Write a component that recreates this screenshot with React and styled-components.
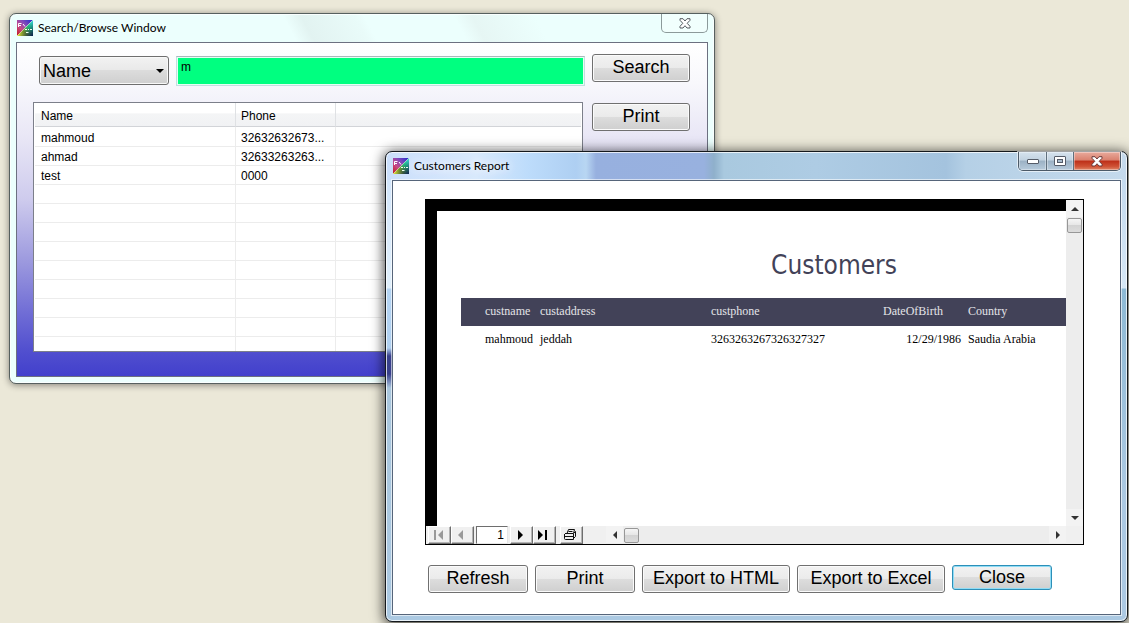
import * as React from "react";
import styled, { createGlobalStyle } from "styled-components";

const contacts = [
  { name: "mahmoud", phone: "32632632673..." },
  { name: "ahmad", phone: "32633263263..." },
  { name: "test", phone: "0000" },
];
const EMPTY_ROWS = 9;

const customers = [
  {
    custname: "mahmoud",
    custaddress: "jeddah",
    custphone: "3263263267326327327",
    dateOfBirth: "12/29/1986",
    country: "Saudia Arabia",
  },
];

const AppIcon = ({ id }) => (
  <svg width="16" height="16" viewBox="0 0 16 16" aria-hidden="true">
    <defs>
      <linearGradient id={`${id}-a`} x1="0" y1="1" x2="1" y2="0">
        <stop offset="0" stopColor="#c01818" />
        <stop offset="0.35" stopColor="#c84a86" />
        <stop offset="0.6" stopColor="#8a4ab8" />
        <stop offset="1" stopColor="#1c2cd0" />
      </linearGradient>
      <linearGradient id={`${id}-b`} x1="0" y1="1" x2="1" y2="0">
        <stop offset="0" stopColor="#f4f230" />
        <stop offset="0.35" stopColor="#7a9a28" />
        <stop offset="0.65" stopColor="#22c888" />
        <stop offset="1" stopColor="#38e0f0" />
      </linearGradient>
      <linearGradient id={`${id}-c`} x1="0.5" y1="0.5" x2="1" y2="1">
        <stop offset="0" stopColor="#103050" stopOpacity="0" />
        <stop offset="1" stopColor="#081c50" />
      </linearGradient>
    </defs>
    <path d="M0 0H16L0 16Z" fill={`url(#${id}-a)`} />
    <path d="M16 0V16H0Z" fill={`url(#${id}-b)`} />
    <path d="M16 0V16H0Z" fill={`url(#${id}-c)`} />
    <path d="M0 16L16 0" stroke="#e8e8c0" strokeWidth="0.5" />
    <path d="M1.500 7V3.500H4.500M1.500 5.500H4M6 4L8 6.500" stroke="#fff" strokeWidth="1" fill="none" />
    <path d="M8 9.500H10M11 9.500H12M13 9.500H15M9 12.500H11.500" stroke="#f0fff0" strokeWidth="1" />
  </svg>
);

const CrossGlyph = ({ fill, stroke }) => (
  <svg width="12" height="11" viewBox="0 0 12 11" aria-hidden="true">
    <path
      d="M1 .7H4L6 3 8 .7H11V2.300L8.200 5.300 11 8.300V10H8L6 7.700 4 10H1V8.300L3.800 5.300 1 2.300Z"
      fill={fill}
      stroke={stroke}
      strokeWidth="1"
      strokeLinejoin="round"
    />
  </svg>
);

const Arrow = ({ dir, size = 4, fill = "#333" }) => {
  const turn = { up: 0, right: 90, down: 180, left: 270 }[dir];
  return (
    <svg width="8" height="8" viewBox="-4 -4 8 8" aria-hidden="true">
      <path d={`M${-size} 2L0 ${2 - size}L${size} 2Z`} fill={fill} transform={`rotate(${turn})`} />
    </svg>
  );
};

const NavGlyph = ({ back, bar, fill }) => (
  <svg width="12" height="12" viewBox="0 0 12 12" aria-hidden="true">
    <g fill={fill} transform={back ? "translate(12 0) scale(-1 1)" : undefined}>
      <path d={bar ? "M1 1V11L6 6Z" : "M4 1V11L9 6Z"} />
      {bar && <path d="M8 1H10V11H8Z" />}
    </g>
  </svg>
);

const PrinterGlyph = () => (
  <svg width="12" height="12" viewBox="0 0 12 12" fill="none" stroke="#111" aria-hidden="true">
    <path d="M3 4.500L4.500 .5H10.500L9.500 4.500" />
    <path d="M4.500 2.500H8.500M1 4.500H9.500M9.500 4.500L11.500 2.500V7.500L9.500 9.500" />
    <path d="M.5 5V9.500Q.5 10.500 1.500 10.500H9.500V5M.5 7.500H9.500" />
  </svg>
);

const SearchWindow = () => {
  const [field, setField] = React.useState("name");
  const [query, setQuery] = React.useState("m");

  return (
    <SearchFrame aria-label="Search/Browse Window">
      <TitleBar>
        <TitleLabel>
          <AppIcon id="search-icon" />
          <Caption>Search/Browse Window</Caption>
        </TitleLabel>
        <InactiveClose aria-label="Close window">
          <CrossGlyph fill="#fff" stroke="#555b60" />
        </InactiveClose>
      </TitleBar>
      <SearchClient>
        <FilterBar>
          <SelectWrap>
            <FieldSelect aria-label="Search field" value={field} onChange={(e) => setField(e.target.value)}>
              <option value="name">Name</option>
              <option value="phone">Phone</option>
            </FieldSelect>
            <Arrow dir="down" fill="#000" />
          </SelectWrap>
          <QueryInput aria-label="Search text" value={query} onChange={(e) => setQuery(e.target.value)} />
        </FilterBar>
        <PushButton>Search</PushButton>
        <ListView>
          <ListTable>
            <colgroup>
              <ListCol $width={201} />
              <ListCol $width={100} />
              <col />
            </colgroup>
            <thead>
              <tr>
                <ListHead>Name</ListHead>
                <ListHead>Phone</ListHead>
                <ListHead as="td" />
              </tr>
            </thead>
            <tbody>
              {contacts.map((contact) => (
                <ListRow key={contact.name}>
                  <ListCell>{contact.name}</ListCell>
                  <ListCell>{contact.phone}</ListCell>
                  <ListCell />
                </ListRow>
              ))}
              {Array.from({ length: EMPTY_ROWS }, (_, i) => (
                <ListRow key={i}>
                  <ListCell />
                  <ListCell />
                  <ListCell />
                </ListRow>
              ))}
            </tbody>
          </ListTable>
        </ListView>
        <SideActions>
          <PushButton>Print</PushButton>
        </SideActions>
      </SearchClient>
    </SearchFrame>
  );
};

const ReportPage = () => (
  <Paper>
    <ReportTitle>Customers</ReportTitle>
    <ReportTable>
      <colgroup>
        <ListCol $width={79} />
        <ListCol $width={171} />
        <ListCol $width={172} />
        <ListCol $width={85} />
        <col />
      </colgroup>
      <thead>
        <tr>
          <ReportHead>custname</ReportHead>
          <ReportHead>custaddress</ReportHead>
          <ReportHead>custphone</ReportHead>
          <ReportHead>DateOfBirth</ReportHead>
          <ReportHead>Country</ReportHead>
        </tr>
      </thead>
      <tbody>
        {customers.map((row) => (
          <tr key={row.custphone}>
            <ReportCell>{row.custname}</ReportCell>
            <ReportCell>{row.custaddress}</ReportCell>
            <ReportCell>{row.custphone}</ReportCell>
            <ReportCell $right>{row.dateOfBirth}</ReportCell>
            <ReportCell>{row.country}</ReportCell>
          </tr>
        ))}
      </tbody>
    </ReportTable>
  </Paper>
);

const ReportWindow = () => {
  const [page, setPage] = React.useState("1");

  return (
    <ReportFrame aria-label="Customers Report">
      <TitleBar>
        <TitleLabel>
          <AppIcon id="report-icon" />
          <Caption $glow>Customers Report</Caption>
        </TitleLabel>
        <CaptionButtons>
          <CaptionButton $width={27} aria-label="Minimize">
            <svg width="12" height="5" viewBox="0 0 12 5" aria-hidden="true">
              <rect x=".5" y=".5" width="11" height="4" rx=".5" fill="#fff" stroke="#555c68" />
            </svg>
          </CaptionButton>
          <CaptionButton $width={27} aria-label="Maximize">
            <svg width="12" height="10" viewBox="0 0 12 10" aria-hidden="true">
              <rect x=".5" y=".5" width="11" height="9" rx=".5" fill="#fff" stroke="#555c68" />
              <rect x="3.500" y="3.500" width="5" height="3" fill="#a9bccd" stroke="#555c68" />
            </svg>
          </CaptionButton>
          <CaptionButton $width={47} $danger aria-label="Close window">
            <CrossGlyph fill="#fff" stroke="#6b3a3a" />
          </CaptionButton>
        </CaptionButtons>
      </TitleBar>
      <ReportClient>
        <Viewer>
          <Canvas>
            <ReportPage />
          </Canvas>
          <ScrollBar $vertical>
            <ScrollArrow aria-label="Scroll up"><Arrow dir="up" /></ScrollArrow>
            <ScrollTrack $vertical><ScrollThumb /></ScrollTrack>
            <ScrollArrow aria-label="Scroll down"><Arrow dir="down" /></ScrollArrow>
          </ScrollBar>
          <PagerRow>
            <Pager>
              <PagerButton disabled aria-label="First page"><NavGlyph back bar fill="#999" /></PagerButton>
              <PagerButton disabled aria-label="Previous page"><NavGlyph back fill="#999" /></PagerButton>
              <PageInput aria-label="Page" value={page} onChange={(e) => setPage(e.target.value)} />
              <PagerButton aria-label="Next page"><NavGlyph fill="#000" /></PagerButton>
              <PagerButton aria-label="Last page"><NavGlyph bar fill="#000" /></PagerButton>
              <PrintTool aria-label="Print report"><PrinterGlyph /></PrintTool>
            </Pager>
            <ScrollBar>
              <ScrollArrow aria-label="Scroll left"><Arrow dir="left" /></ScrollArrow>
              <ScrollTrack><ScrollThumb /></ScrollTrack>
              <ScrollArrow aria-label="Scroll right"><Arrow dir="right" /></ScrollArrow>
            </ScrollBar>
          </PagerRow>
          <ScrollCorner />
        </Viewer>
        <Actions>
          <PushButton $width={100}>Refresh</PushButton>
          <PushButton $width={100}>Print</PushButton>
          <PushButton $width={148}>Export to HTML</PushButton>
          <PushButton $width={148}>Export to Excel</PushButton>
          <PushButton $width={100} $focused>Close</PushButton>
        </Actions>
      </ReportClient>
    </ReportFrame>
  );
};

const App = () => (
  <Desktop>
    <GlobalStyle />
    <SearchWindow />
    <ReportWindow />
  </Desktop>
);

const GlobalStyle = createGlobalStyle`
  * {
    box-sizing: border-box;
  }
  body {
    margin: 0;
    font-family: "Liberation Sans", Arial, sans-serif;
    font-size: 12px;
    color: #000;
  }
  button, input, select {
    font-family: inherit;
    color: inherit;
    margin: 0;
  }
  svg {
    display: block;
    flex: none;
  }
`

const Desktop = styled.main`
  position: relative;
  min-height: 100vh;
  overflow: hidden;
  background: #ebe8d8;
`

const Frame = styled.section`
  position: absolute;
  padding: 0 6px 6px;
`
const SearchFrame = styled(Frame)`
  top: 13px;
  left: 9px;
  right: 414px;
  border: 1px solid #56605f;
  border-radius: 7px;
  background: linear-gradient(62deg, transparent 52%, #e2f3f1 54%, #e9fbf9 60%, transparent 61%, transparent 71%, #e6f6f4 73%, transparent 80%), #ecfffd;
  box-shadow: inset 0 0 0 1px #fafffe, 0 1px 7px rgba(0, 0, 0, 0.45);
`
const ReportFrame = styled(Frame)`
  top: 151px;
  left: 385px;
  right: 1px;
  border: 1px solid #15191d;
  border-radius: 7px;
  background:
    linear-gradient(#d3e6fb 0, #e0effb 108px, #b4d4f3 109px, #b0d0f0 168px, #39408c 176px, #39408c 194px, #a9c6dd 208px, #abc9e2 100%) 0 28px / 7px 100% no-repeat,
    linear-gradient(#c4daee 0, #d6e7f5 108px, #8db9d4 109px, #acc9e2 320px) 100% 28px / 7px 100% no-repeat,
    linear-gradient(90deg, #cbdffb 0, #d8e9fc 90px, #bddcfb 142px, #aecff2 190px, #b8d6f2 200px, #97b0df 210px, #98b1df 318px, #8fb0cb 328px, #a9c9df 338px, #aecce4 430px, #a4c3de 560px, #b5d0e6 580px, #c5daec 100%) 0 0 / 100% 29px no-repeat,
    #abc9e2;
  box-shadow: inset 0 0 0 1px rgba(255, 255, 255, 0.75), 0 2px 13px 1px rgba(0, 0, 0, 0.75);
`

const TitleBar = styled.header`
  display: flex;
  align-items: flex-start;
  justify-content: space-between;
  height: 28px;
`
const TitleLabel = styled.div`
  display: flex;
  align-items: center;
  gap: 5px;
  padding: 6px 0 0 1px;
`
const Caption = styled.h1`
  margin: 0;
  font: 12px/16px Lato, "Open Sans", sans-serif;
  text-shadow: ${({ $glow }) => $glow ? "0 0 8px #fff, 0 0 12px #fff" : "none"};
`

const InactiveClose = styled.button`
  display: flex;
  align-items: center;
  justify-content: center;
  width: 47px;
  height: 19px;
  padding: 0;
  border: 1px solid #8c9a9a;
  border-top: 0;
  border-radius: 0 0 5px 5px;
  background: #f1fffd;
`
const CaptionButtons = styled.div`
  display: flex;
  height: 19px;
  border: 1px solid #4c5a68;
  border-top: 0;
  border-radius: 0 0 5px 5px;
  overflow: hidden;
  box-shadow: 0 0 0 1px rgba(255, 255, 255, 0.6);
`
const CaptionButton = styled.button`
  display: flex;
  align-items: center;
  justify-content: center;
  width: ${({ $width }) => $width}px;
  padding: 0;
  border: 0;
  border-left: 1px solid #5f6f7d;
  box-shadow: inset 0 0 0 1px rgba(255, 255, 255, 0.35);
  background: ${({ $danger }) => $danger
    ? "linear-gradient(#e9aa9c 0, #d9816f 45%, #bd2f18 50%, #cf5235 80%, #e0886a 100%)"
    : "linear-gradient(#d6e3ee 0, #c1d2e0 45%, #9bb1c4 50%, #b7cbdc 100%)"};
  &:first-child {
    border-left: 0;
  }
`

const SearchClient = styled.div`
  display: grid;
  grid-template-columns: minmax(0, 1fr) 98px;
  grid-template-rows: 32px auto;
  gap: 16px 9px;
  padding: 11px 17px 24px 16px;
  border: 1px solid #6c7080;
  background: linear-gradient(#fff 0, #f8f8fc 12%, #e9e7f6 28%, #cecbed 47%, #9b98de 66%, #7370d6 80%, #5250cf 92%, #4240cc 100%);
`
const FilterBar = styled.div`
  display: flex;
  gap: 7px;
  padding: 2px 0 0 6px;
  margin-right: -2px;
`
const SelectWrap = styled.label`
  display: grid;
  grid-template-columns: 117px 13px;
  align-items: center;
  height: 29px;
  & > svg {
    grid-area: 1 / 2;
    pointer-events: none;
  }
`
const FieldSelect = styled.select`
  grid-area: 1 / 1 / 2 / 3;
  width: 100%;
  height: 29px;
  padding: 0 18px 0 3px;
  appearance: none;
  border: 1px solid #6e6e6e;
  border-radius: 3px;
  background: linear-gradient(#f2f2f2 0, #e9e9e9 48%, #dcdcdc 50%, #cfcfcf 100%);
  box-shadow: inset 0 0 0 1px #f8f8f8;
  font-size: 18px;
`
const QueryInput = styled.input`
  flex: 1;
  min-width: 0;
  height: 30px;
  padding: 2px 4px 10px;
  border: 1px solid #c3dde0;
  border-top-color: #a9b7bb;
  background: #00ff80;
  box-shadow: inset 0 0 0 1px #e4fff2;
  font-size: 12px;
  line-height: 16px;
  outline: none;
`

const PushButton = styled.button`
  width: ${({ $width }) => $width ? `${$width}px` : "100%"};
  height: ${({ $focused }) => $focused ? 25 : 28}px;
  padding: 0 0 2px;
  border: 1px solid ${({ $focused }) => $focused ? "#2d8fb8" : "#707070"};
  border-radius: 3px;
  background: linear-gradient(#f2f2f2 0, #ebebeb 48%, #dddddd 50%, #cfcfcf 100%);
  box-shadow: inset 0 0 0 1px ${({ $focused }) => $focused ? "#8fdcf5" : "#fbfbfb"};
  font-size: 18px;
  line-height: 20px;
  white-space: nowrap;
`
const SideActions = styled.div`
  padding-top: 1px;
`

const ListView = styled.div`
  height: 250px;
  padding: 0 1px 1px;
  border: 1px solid #7c7f8a;
  background: #fff;
  overflow: hidden;
`
const ListTable = styled.table`
  width: 100%;
  table-layout: fixed;
  border-collapse: separate;
  border-spacing: 0;
`
const ListCol = styled.col`
  width: ${({ $width }) => $width}px;
`
const ListHead = styled.th`
  height: 24px;
  padding: 2px 5px 0;
  border-right: 1px solid #dfe1e4;
  border-bottom: 1px solid #d2d4d8;
  background: linear-gradient(#fff 0, #fff 45%, #f4f5f6 46%, #f1f2f4 100%);
  font-weight: normal;
  text-align: left;
  &:first-child {
    padding-left: 6px;
  }
  &:last-child {
    border-right: 0;
  }
`
const ListCell = styled.td`
  height: 19px;
  padding: 1px 5px 0;
  border-right: 1px solid #ececec;
  border-bottom: 1px solid #ececec;
  line-height: 16px;
  white-space: nowrap;
  &:first-child {
    padding-left: 6px;
  }
  &:last-child {
    border-right: 0;
  }
`
const ListRow = styled.tr`
  &:first-child ${ListCell} {
    height: 20px;
    padding-top: 2px;
  }
`

const ReportClient = styled.div`
  display: flex;
  flex-direction: column;
  gap: 20px;
  padding: 18px 36px 21px 32px;
  border: 1px solid #56657a;
  background: #fff;
  box-shadow: 0 0 0 1px rgba(255, 255, 255, 0.6);
`
const Viewer = styled.div`
  display: grid;
  grid-template-columns: minmax(0, 1fr) 17px;
  grid-template-rows: auto 18px;
  border: 1px solid #000;
`
const Canvas = styled.div`
  padding: 11px 0 0 11px;
  background: #000;
  overflow: hidden;
`
const Paper = styled.article`
  width: 794px;
  min-height: 315px;
  padding: 34px 24px 0;
  background: #fff;
`
const ReportTitle = styled.h2`
  margin: 0 0 13px;
  color: #424258;
  font: 26px/40px "DejaVu Sans Condensed", "Noto Sans", sans-serif;
  text-align: center;
`
const ReportTable = styled.table`
  width: 100%;
  table-layout: fixed;
  border-collapse: collapse;
  font-family: "Liberation Serif", "Times New Roman", serif;
  font-size: 12px;
`
const ReportHead = styled.th`
  height: 28px;
  padding: 0 0 2px;
  background: #424258;
  color: #e4e4e8;
  font-weight: normal;
  text-align: left;
  &:first-child {
    padding-left: 24px;
  }
`
const ReportCell = styled.td`
  height: 26px;
  padding: 0;
  text-align: ${({ $right }) => $right ? "right" : "left"};
  padding-right: ${({ $right }) => $right ? 7 : 0}px;
  &:first-child {
    padding-left: 24px;
  }
`

const ScrollBar = styled.div`
  display: flex;
  flex: 1;
  min-width: 0;
  flex-direction: ${({ $vertical }) => $vertical ? "column" : "row"};
  background: #ededed;
`
const ScrollArrow = styled.button`
  display: flex;
  flex: none;
  align-items: center;
  justify-content: center;
  width: 17px;
  height: 17px;
  padding: 0;
  border: 0;
  background: #f3f3f3;
`
const ScrollTrack = styled.div`
  display: flex;
  flex: 1;
  padding: ${({ $vertical }) => $vertical ? "1px" : "2px 1px 1px"};
`
const ScrollThumb = styled.div`
  width: 15px;
  height: 15px;
  border: 1px solid #979797;
  border-radius: 2px;
  background: linear-gradient(#f5f5f5 0, #e6e6e6 48%, #d3d3d3 50%, #dcdcdc 100%);
`
const ScrollCorner = styled.div`
  background: #f0f0f0;
`
const PagerRow = styled.div`
  display: flex;
  background: #f0f0f0;
`
const Pager = styled.div`
  display: flex;
  width: 180px;
  padding-left: 2px;
`
const PagerButton = styled.button`
  display: flex;
  align-items: center;
  justify-content: center;
  width: 23px;
  height: 18px;
  padding: 0 3px 0 0;
  border: 1px solid;
  border-color: #fff #6e6e6e #6e6e6e #fff;
  background: #f0f0f0;
  box-shadow: inset -1px -1px 0 #b4b4b4;
`
const PrintTool = styled(PagerButton)`
  margin-left: 4px;
  padding-right: 4px;
`
const PageInput = styled.input`
  width: 32px;
  height: 18px;
  margin: 0 2px;
  padding: 0 3px 0 0;
  border: 1px solid;
  border-color: #6e6e6e #e6e6e6 #e6e6e6 #6e6e6e;
  background: #fff;
  font-size: 12px;
  text-align: right;
`

const Actions = styled.div`
  display: flex;
  align-items: flex-start;
  gap: 7px;
  padding-left: 3px;
`

export default App;
